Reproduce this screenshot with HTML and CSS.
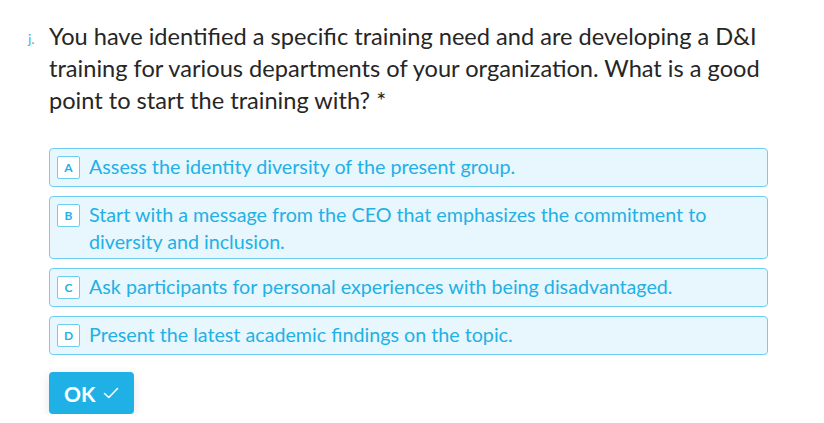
FILE: index.html
```html
<!DOCTYPE html>
<html>
<head>
<meta charset="utf-8">
<link rel="stylesheet" href="styles.css">
</head>
<body>
<div class="page">
  <div class="question">
    <span class="qnum">j.</span>
    <h1 class="qtext">You have identified a specific training need and are developing a D&amp;I training for various departments of your organization. What is a good point to start the training with? *</h1>
  </div>
  <div class="options">
    <div class="option"><span class="key">A</span><span class="label">Assess the identity diversity of the present group.</span></div>
    <div class="option"><span class="key">B</span><span class="label">Start with a message from the CEO that emphasizes the commitment to diversity and inclusion.</span></div>
    <div class="option"><span class="key">C</span><span class="label">Ask participants for personal experiences with being disadvantaged.</span></div>
    <div class="option"><span class="key">D</span><span class="label">Present the latest academic findings on the topic.</span></div>
  </div>
  <button class="ok">OK <svg class="check" width="16" height="12" viewBox="0 0 16 12"><path d="M1.5 6.5 L5.8 10.5 L14.5 1.5" fill="none" stroke="#fff" stroke-width="1.6" stroke-linecap="round" stroke-linejoin="round"/></svg></button>
</div>
</body>
</html>
```
FILE: styles.css
```css
html, body {
  margin: 0;
  padding: 0;
  background: #ffffff;
}
body {
  font-family: Lato, "Open Sans", sans-serif;
}
.page {
  padding: 20px 56px 0 28px;
}
.question {
  display: flex;
  align-items: flex-start;
}
.qnum {
  width: 21px;
  flex: none;
  font-size: 14px;
  line-height: 32px;
  color: #3db4e7;
  padding-top: 3px;
}
.qtext {
  margin: 0;
  font-size: 23.6px;
  font-weight: 400;
  line-height: 32px;
  color: #262627;
}
.options {
  margin: 32px 0 0 21px;
  display: flex;
  flex-direction: column;
  gap: 9px;
}
.option {
  display: flex;
  align-items: flex-start;
  gap: 9px;
  background: #e8f7fd;
  border: 1px solid #6ccff2;
  border-radius: 4px;
  padding: 4px 8px 3px 7px;
}
.key {
  flex: none;
  box-sizing: border-box;
  width: 23px;
  height: 23px;
  margin: 3px 0 4px;
  background: #ffffff;
  border: 1px solid #6ccff2;
  border-radius: 2px;
  display: flex;
  align-items: center;
  justify-content: center;
  font-size: 12px;
  font-weight: 700;
  color: #1fb1e6;
}
.label {
  font-size: 19.7px;
  line-height: 27px;
  color: #22b0e6;
}
.ok {
  margin: 17px 0 0 21px;
  height: 42px;
  padding: 0 15px;
  border: none;
  border-radius: 4px;
  background: #1fb1e6;
  color: #ffffff;
  font-family: Lato, "Open Sans", sans-serif;
  font-size: 21px;
  font-weight: 700;
  display: flex;
  align-items: center;
  gap: 8px;
  box-shadow: 0 3px 12px rgba(0, 0, 0, 0.1);
}
.check {
  display: block;
}
```
